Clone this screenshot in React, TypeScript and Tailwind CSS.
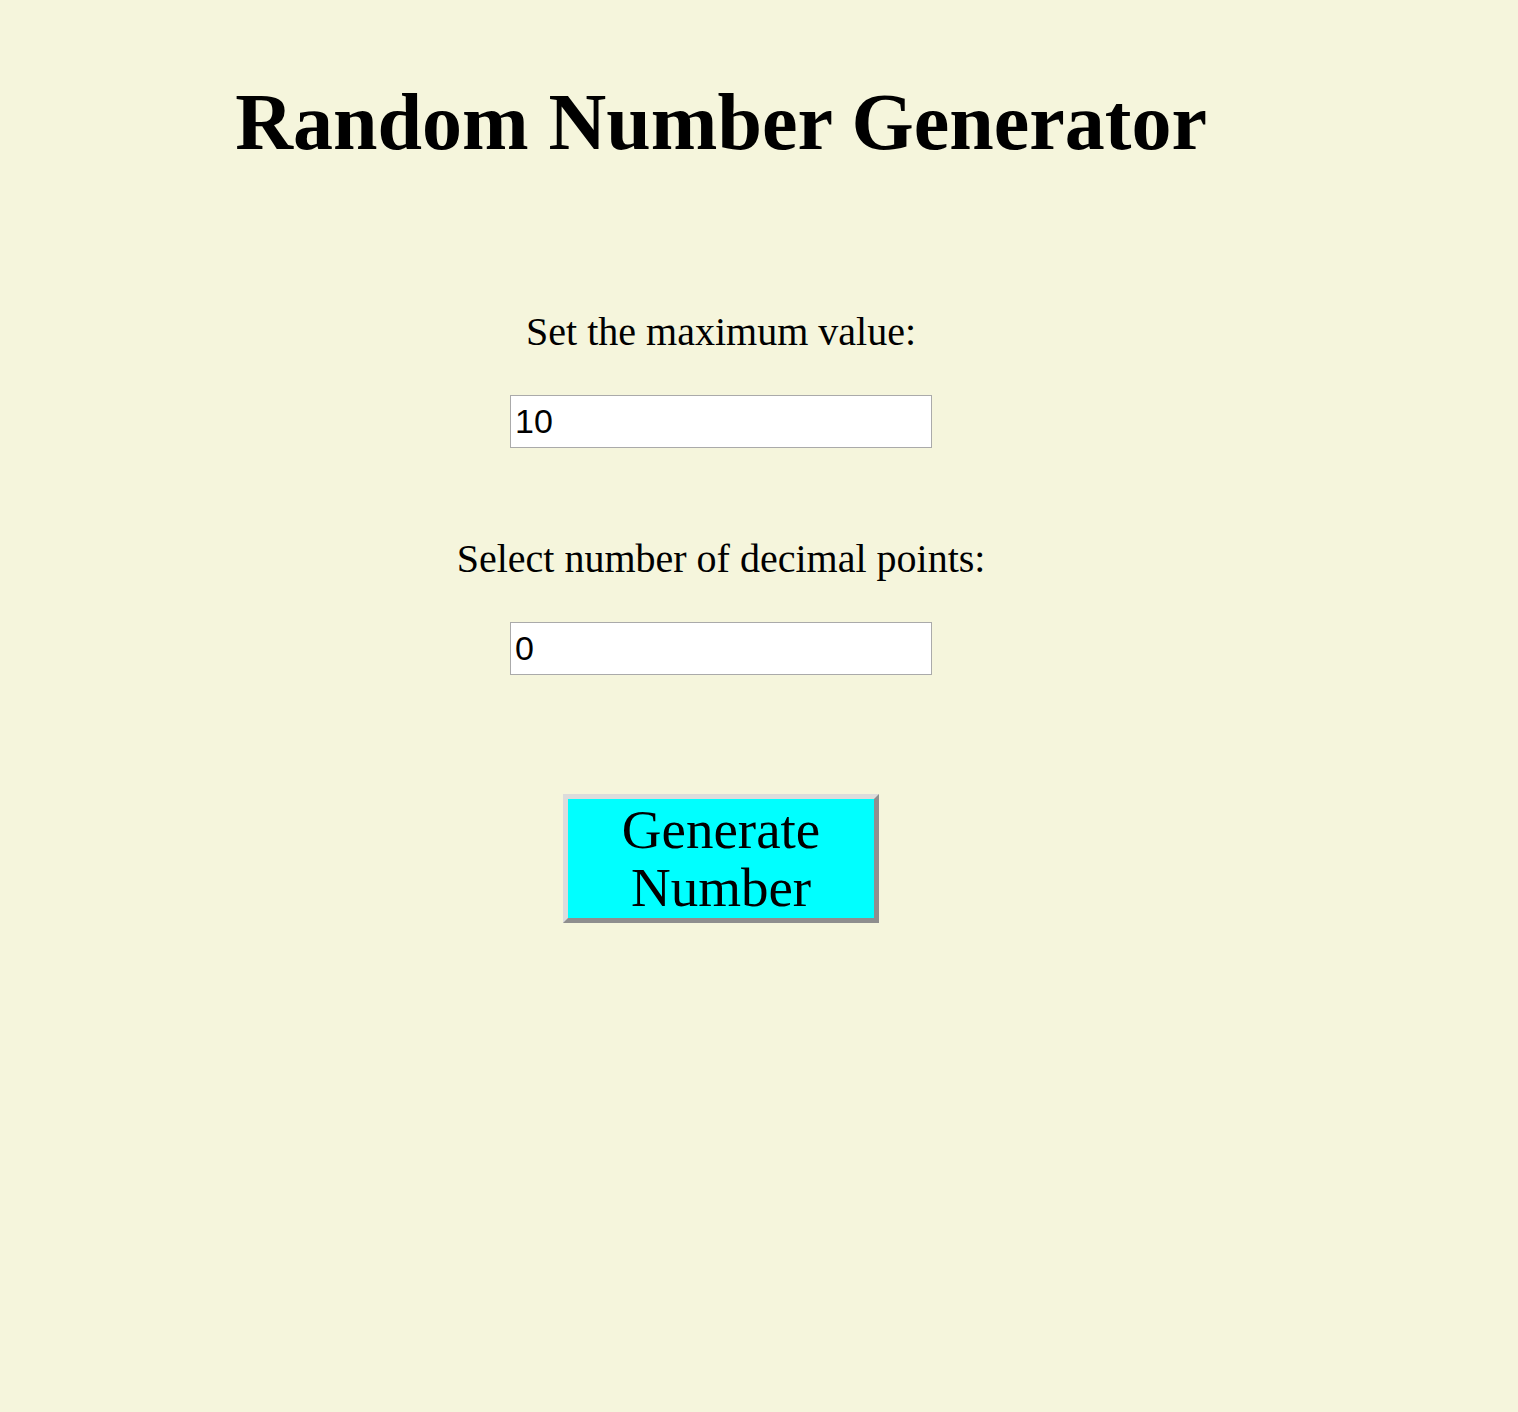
import React, { useState } from "react";

const serif = { fontFamily: '"Liberation Serif", "Times New Roman", serif' };

export default function App() {
  const [max, setMax] = useState("10");
  const [decimals, setDecimals] = useState("0");

  return (
    <div className="min-h-screen bg-[#f5f5dc] text-black font-['Liberation_Serif',serif]">
      <div className="w-[95%] flex flex-col items-center">
        <h1 className="mt-[76px] text-[80px] leading-[92px] font-bold">
          Random Number Generator
        </h1>

        <label className="mt-[141px] text-[40px] leading-[46px]">
          Set the maximum value:
        </label>
        <input
          type="text"
          value={max}
          onChange={(e) => setMax(e.target.value)}
          className="mt-[40px] w-[422px] h-[53px] border border-[#aaaaaa] bg-white px-[4px] text-[34px] font-['Liberation_Sans',sans-serif] outline-none"
        />

        <label className="mt-[88px] text-[40px] leading-[46px]">
          Select number of decimal points:
        </label>
        <input
          type="text"
          value={decimals}
          onChange={(e) => setDecimals(e.target.value)}
          className="mt-[40px] w-[422px] h-[53px] border border-[#aaaaaa] bg-white px-[4px] text-[34px] font-['Liberation_Sans',sans-serif] outline-none"
        />

        <button
          style={serif}
          className="mt-[119px] w-[316px] pt-[2px] pb-[1px] bg-[#00ffff] border-[5px] border-t-[#dcdcdc] border-l-[#dcdcdc] border-b-[#8e8e8e] border-r-[#8e8e8e] text-[55px] leading-[58px] text-black"
        >
          Generate
          <br />
          Number
        </button>
      </div>
    </div>
  );
}
